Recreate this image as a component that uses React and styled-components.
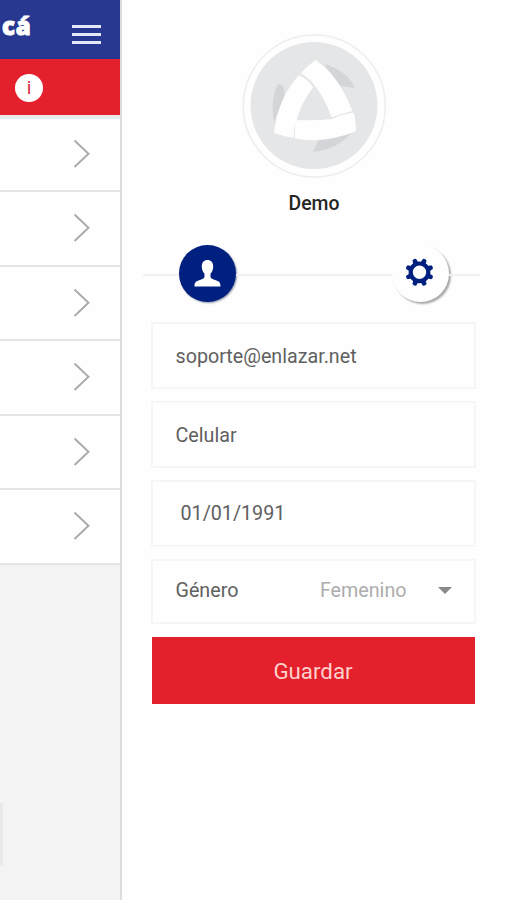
import React from "react";
import styled, { createGlobalStyle } from "styled-components";

const menuItems = [1, 2, 3, 4, 5, 6];

const Chevron = () => (
  <svg width="20" height="30" viewBox="0 0 20 30" fill="none">
    <path d="M2.5 1.5L16.5 14.7L2.5 28" stroke="#aaaaaa" strokeWidth="1.9" />
  </svg>
);

const Logo = () => (
  <svg width="145" height="145" viewBox="0 0 145 145">
    <circle cx="72.3" cy="72" r="71" fill="#fefefe" stroke="#eeeeef" strokeWidth="1.6" />
    <circle cx="72" cy="71.5" r="63.5" fill="#e5e6e7" />
    <g fill="#d3d5d8">
      <path d="M82 30Q91 32 101 39Q109 45 113 54L98 52Z" />
      <path d="M36 50Q28 65 32 88L43 61L41 51Z" />
      <path d="M77 105L109 99Q96 115 71 118Z" />
    </g>
    <g fill="#fefefe">
      <path d="M58.7 39.3Q66 31 73.7 26Q97 42 110.5 77L98 80.5L89.5 83.5Q83 64 72.5 51.5Q67 44 58.7 39.3Z" />
      <path d="M57 41Q66 45 71 53.3Q58 71 54 88Q51 97 51.8 104Q41 102 32 99Q36 64 57 41Z" />
      <path d="M54.7 86Q73 87 90 85L98 81.5L111.5 78.5Q114 86 114 97Q84 110 53 104.5Q52 95 54.7 86Z" />
    </g>
  </svg>
);

const UserIcon = () => (
  <svg width="28" height="28" viewBox="0.5 0 28 28" fill="#ffffff">
    <path d="M14 1C10.5 1 8.3 3.5 8.3 7.2C8.3 10.4 9.3 13 11 14.8V18C10.4 20 8.2 20.4 5 21.4C2.2 22.4 1 23.5 1 27.5H27C27 23.5 25.8 22.4 23 21.4C19.8 20.4 17.6 20 17 18V14.8C18.7 13 19.7 10.4 19.7 7.2C19.7 3.5 17.5 1 14 1Z" />
  </svg>
);

const GearIcon = () => (
  <svg width="30" height="30" viewBox="-13.5 -14.3 30 30" fill="#002080">
    <circle r="8.8" fill="none" stroke="#002080" strokeWidth="4.2" />
    {[22.5, 67.5, 112.5, 157.5, 202.5, 247.5, 292.5, 337.5].map((angle) => (
      <path
        key={angle}
        d="M-2.6 -10L-2 -13.6Q0 -15 2 -13.6L2.6 -10Z"
        transform={`rotate(${angle})`}
      />
    ))}
  </svg>
);

const App = () => {
  return (
    <>
      <GlobalStyle />
      <Page>
        <Sidebar>
          <Header>
            <Title>cá</Title>
            <MenuButton aria-label="menu">
              <MenuLine />
              <MenuLine />
              <MenuLine />
            </MenuButton>
          </Header>
          <Notice>
            <InfoBadge>i</InfoBadge>
          </Notice>
          <List>
            {menuItems.map((item) => (
              <ListRow key={item}>
                <Chevron />
              </ListRow>
            ))}
          </List>
          <ScrollMark />
        </Sidebar>
        <Drawer>
          <Logo />
          <UserName>Demo</UserName>
          <Tabs>
            <TabLine $width="36px" />
            <Tab $active>
              <UserIcon />
            </Tab>
            <TabLine $grow />
            <Tab>
              <GearIcon />
            </Tab>
            <TabLine $width="31px" />
          </Tabs>
          <Form>
            <Field $drop="2px">soporte@enlazar.net</Field>
            <Field $drop="2px">Celular</Field>
            <Field $indent="28px">01/01/1991</Field>
            <Field $height="65px" $lift="2px">
              Género
              <Select>
                Femenino
                <Caret />
              </Select>
            </Field>
            <SaveButton>Guardar</SaveButton>
          </Form>
        </Drawer>
      </Page>
    </>
  );
};

const GlobalStyle = createGlobalStyle`
  * {
    box-sizing: border-box;
  }
  body {
    margin: 0;
    font-family: Roboto, "Liberation Sans", sans-serif;
    background-color: #fefefe;
  }
`;

const Page = styled.div`
  display: flex;
  width: 506px;
  height: 900px;
  overflow: hidden;
`;

const Sidebar = styled.div`
  display: flex;
  flex-direction: column;
  width: 122px;
  border-right: 2px solid #dcdcdc;
  background-color: #f3f3f3;
`;

const Header = styled.div`
  display: flex;
  justify-content: space-between;
  height: 59px;
  padding-right: 19px;
  background-color: #283891;
`;

const Title = styled.div`
  padding: 10px 0 0 2px;
  font-family: "Open Sans", sans-serif;
  font-size: 24px;
  font-weight: 800;
  line-height: 32px;
  letter-spacing: 0.8px;
  color: white;
  -webkit-text-stroke: 1px white;
`;

const MenuButton = styled.button`
  display: flex;
  flex-direction: column;
  gap: 5px;
  margin: 25px 0 0;
  padding: 0;
  border: none;
  background: none;
`;

const MenuLine = styled.span`
  width: 29px;
  height: 3px;
  background-color: #e5e8f6;
`;

const Notice = styled.div`
  display: flex;
  align-items: center;
  height: 56px;
  padding-left: 15px;
  background-color: #e3202b;
`;

const InfoBadge = styled.div`
  display: flex;
  justify-content: center;
  align-items: center;
  width: 28px;
  height: 28px;
  margin-top: 1px;
  border-radius: 50%;
  font-size: 19px;
  color: #d5303c;
  background-color: white;
`;

const List = styled.div`
  border-top: 4px solid #e9ebeb;
`;

const ListRow = styled.div`
  display: flex;
  align-items: center;
  height: 74.5px;
  padding-left: 72px;
  border-bottom: 2px solid #e4e4e4;
  background-color: #fefefe;

  &:first-child {
    height: 73px;
    padding-bottom: 1px;
  }
`;

const ScrollMark = styled.div`
  width: 3px;
  height: 62px;
  margin-top: 238px;
  background-color: #e9e9e9;
`;

const Drawer = styled.div`
  display: flex;
  flex-direction: column;
  flex: 1;
  align-items: center;
  padding-top: 34px;
`;

const UserName = styled.div`
  margin-top: 13px;
  font-size: 19.4px;
  font-weight: 500;
  line-height: 24px;
  color: #252525;
`;

const Tabs = styled.div`
  display: flex;
  align-items: center;
  width: 337px;
  height: 58px;
  margin: 28px 5px 0 0;
`;

const TabLine = styled.div`
  flex: ${(props) => (props.$grow ? "1" : "none")};
  width: ${(props) => props.$width || "auto"};
  height: 2px;
  margin-top: 4px;
  background-color: #f0f0f0;
`;

const Tab = styled.div`
  display: flex;
  justify-content: center;
  align-items: center;
  width: 57px;
  height: 57px;
  border-radius: 50%;
  background-color: ${(props) => (props.$active ? "#002080" : "#fefefe")};
  box-shadow: ${(props) =>
    props.$active ? "1px 1px 2px #8d93a8" : "2px 2px 2px #a9a9a9"};
`;

const Form = styled.div`
  display: flex;
  flex-direction: column;
  gap: 12px;
  width: 325px;
  margin: 20px 2px 0 0;
`;

const Field = styled.div`
  display: flex;
  justify-content: space-between;
  align-items: center;
  height: ${(props) => props.$height || "67px"};
  padding-top: ${(props) => props.$drop || "0"};
  padding-right: 22px;
  padding-bottom: ${(props) => props.$lift || "0"};
  padding-left: ${(props) => props.$indent || "23px"};
  border: 2px solid #f6f6f6;
  font-size: 19.7px;
  color: #606060;
`;

const Select = styled.div`
  display: flex;
  align-items: center;
  color: #adadad;
`;

const Caret = styled.span`
  margin-left: 31px;
  border-top: 7px solid #898989;
  border-left: 7px solid transparent;
  border-right: 7px solid transparent;
`;

const SaveButton = styled.button`
  width: 323px;
  height: 67px;
  margin: 1px 0 0 1px;
  border: none;
  font-family: inherit;
  font-size: 22.3px;
  color: #ffd0cb;
  background-color: #e3202b;
`;

export default App;
